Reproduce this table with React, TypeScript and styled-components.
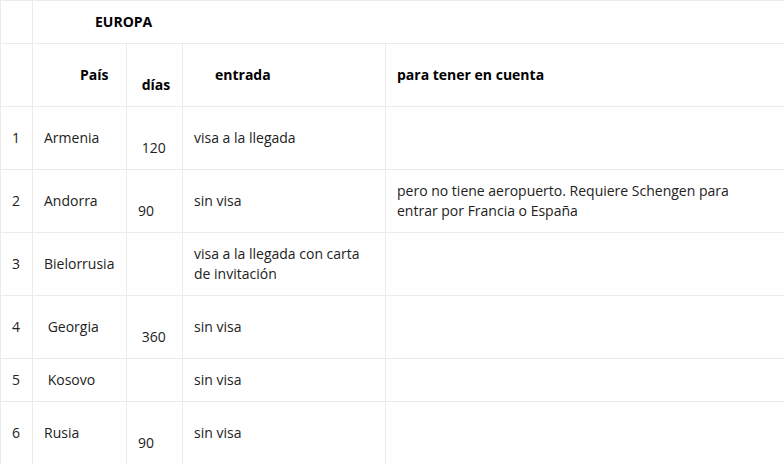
import React from 'react'
import styled, { createGlobalStyle } from 'styled-components'

interface Country {
  num: string
  name: string
  days: string
  entry: string
  note: string
}

const countries: Country[] = [
  { num: '1', name: 'Armenia', days: '\u00a0120', entry: 'visa a la llegada', note: '' },
  {
    num: '2',
    name: 'Andorra',
    days: '90',
    entry: 'sin visa',
    note: 'pero no tiene aeropuerto. Requiere Schengen para entrar por Francia o España',
  },
  { num: '3', name: 'Bielorrusia', days: '', entry: 'visa a la llegada con carta de invitación', note: '' },
  { num: '4', name: '\u00a0Georgia', days: '\u00a0360', entry: 'sin visa', note: '' },
  { num: '5', name: '\u00a0Kosovo', days: '', entry: 'sin visa', note: '' },
  { num: '6', name: 'Rusia', days: '90', entry: 'sin visa', note: '' },
]

function App() {
  return (
    <>
      <GlobalStyle />
      <Wrapper>
        <Table>
          <colgroup>
            <Col $width={32} />
            <Col $width={94} />
            <Col $width={56} />
            <Col $width={203} />
            <Col $width={420} />
          </colgroup>
          <tbody>
            <tr>
              <Cell />
              <HeadCell colSpan={4} $indent={51}>
                EUROPA
              </HeadCell>
            </tr>
            <tr>
              <Cell />
              <HeadCell $indent={36}>País</HeadCell>
              <HeadCell>
                <br />
                {'\u00a0'}días
              </HeadCell>
              <HeadCell $indent={21}>entrada</HeadCell>
              <HeadCell>para tener en cuenta</HeadCell>
            </tr>
            {countries.map(c => (
              <tr key={c.num}>
                <Cell>{c.num}</Cell>
                <Cell>{c.name}</Cell>
                <Cell>
                  {c.days && (
                    <>
                      <br />
                      {c.days}
                    </>
                  )}
                </Cell>
                <Cell>{c.entry}</Cell>
                <NoteCell>{c.note}</NoteCell>
              </tr>
            ))}
          </tbody>
        </Table>
      </Wrapper>
    </>
  )
}

export default App

const GlobalStyle = createGlobalStyle`
  html, body {
    margin: 0;
    padding: 0;
    background: #fff;
    overflow: hidden;
  }
  body {
    font-family: "Open Sans", "Noto Sans", sans-serif;
    font-size: 14px;
    color: #222;
  }
`

const Wrapper = styled.div`
  width: 784px;
  height: 464px;
  overflow: hidden;
`

const Table = styled.table`
  border-collapse: collapse;
  table-layout: fixed;
  width: 805px;
`

const Col = styled.col<{ $width: number }>`
  width: ${p => p.$width}px;
`

const Cell = styled.td<{ $indent?: number }>`
  border: 1px solid #ebebeb;
  padding: 11px 11px 11px ${p => 11 + (p.$indent ?? 0)}px;
  line-height: 20px;
  vertical-align: middle;
  text-align: left;
  color: #222;
`

const NoteCell = styled(Cell)`
  padding-right: 60px;
`

const HeadCell = styled(Cell)`
  font-weight: 700;
  color: #000;
`
